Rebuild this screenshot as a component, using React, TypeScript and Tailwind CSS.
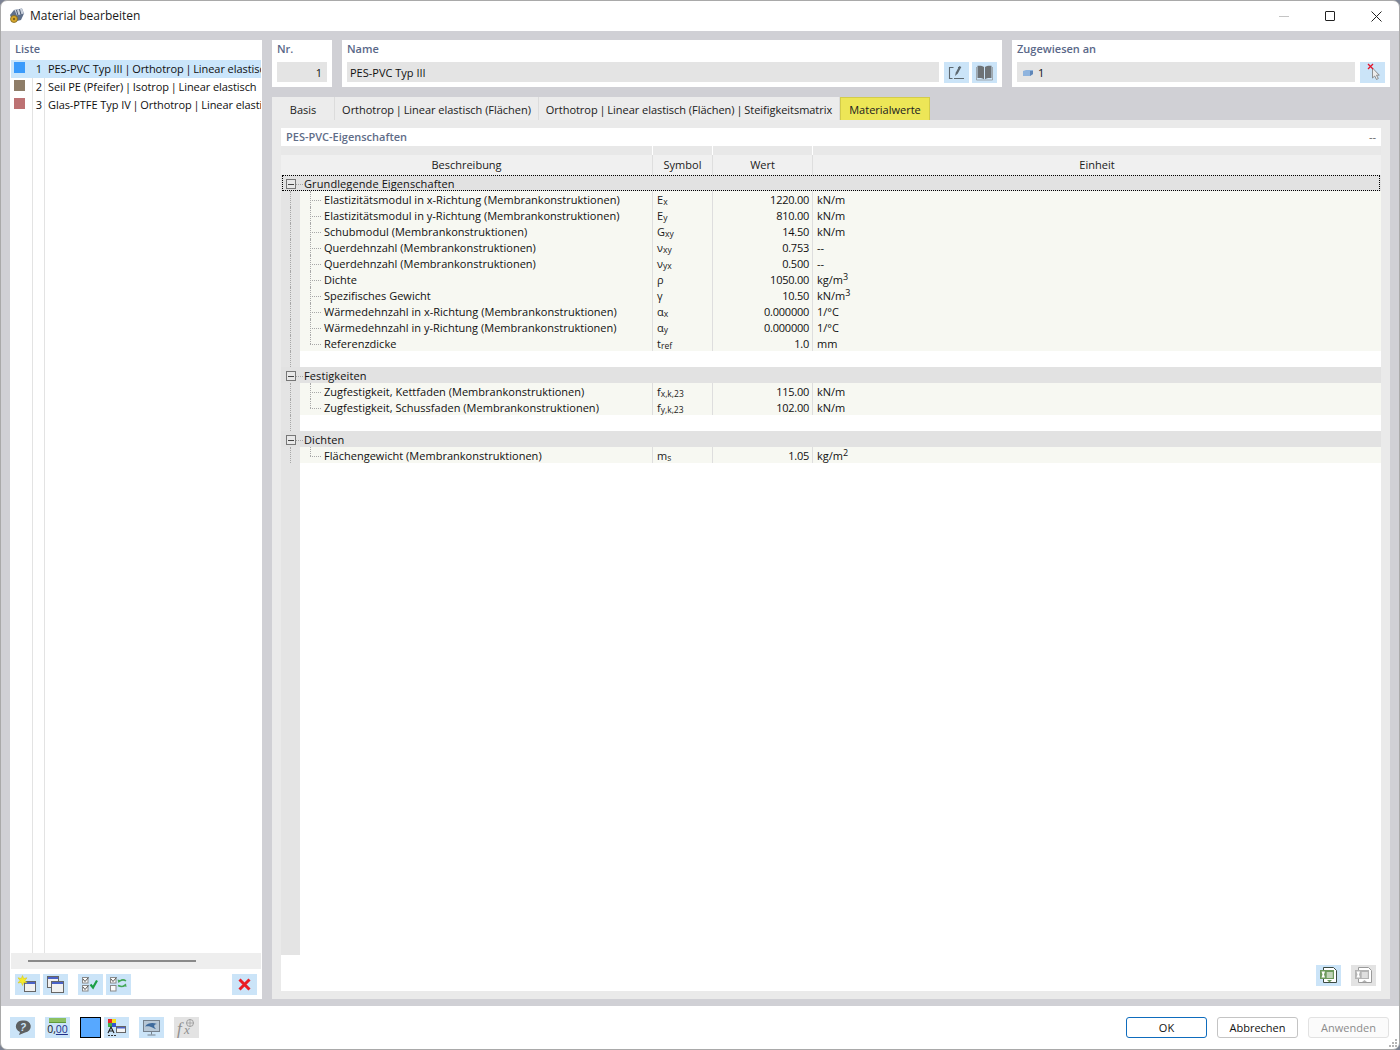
import React from "react";

const font = { fontFamily: '"Open Sans", "Liberation Sans", sans-serif' };

function Btn({ children, gray, className = "" }: { children?: React.ReactNode; gray?: boolean; className?: string }) {
  return (
    <div className={`w-[25px] h-[21px] flex items-center justify-center shrink-0 ${gray ? "bg-[#e3e3e3]" : "bg-[#cbe4f8]"} ${className}`}>
      {children}
    </div>
  );
}

function Piped({ text }: { text: string }) {
  const parts = text.split(" | ");
  return (
    <>
      {parts.map((p, i) => (
        <React.Fragment key={p}>
          {i > 0 && <span className="mx-[-1px]"> | </span>}
          {p}
        </React.Fragment>
      ))}
    </>
  );
}

function Win({ x, y, w, h }: { x: number; y: number; w: number; h: number }) {
  return (
    <g>
      <rect x={x + 0.5} y={y + 0.5} width={w} height={h} fill="#f1f1f1" stroke="#666" />
      <rect x={x + 1} y={y + 1} width={w - 1} height={2} fill="#4a62c8" />
    </g>
  );
}

function NewIcon() {
  return (
    <svg width="25" height="21" viewBox="0 0 25 21">
      <Win x={9} y={7} w={11} h={10} />
      <path d="M7.500 1.500l1.200 3 3.300-.7-2 2.600 2 2.600-3.300-.6L7.500 11.500 6.300 8.400 3 9l2-2.600-2-2.600 3.300.7z" fill="#f6ea2a" stroke="#d4c40c" strokeWidth="0.5" />
    </svg>
  );
}
function CopyIcon() {
  return (
    <svg width="25" height="21" viewBox="0 0 25 21">
      <Win x={4} y={2} w={11} h={11} />
      <Win x={8} y={7} w={12} h={11} />
    </svg>
  );
}
function CheckBox({ x, y, checked }: { x: number; y: number; checked: boolean }) {
  return (
    <g>
      <rect x={x + 0.5} y={y + 0.5} width="5.500" height="5.500" fill="#fafafa" stroke="#8a8a8a" />
      {checked && <path d={`M${x + 1} ${y + 2}l2 2.500 3.500-4`} fill="none" stroke="#444" strokeWidth="0.9" />}
    </g>
  );
}
function CheckAllIcon() {
  return (
    <svg width="25" height="21" viewBox="0 0 25 21">
      <CheckBox x={4} y={3} checked />
      <CheckBox x={4} y={11} checked />
      <path d="M12.500 10.500l2.500 3 4-7" fill="none" stroke="#1b9f45" strokeWidth="2.200" />
    </svg>
  );
}
function SwapIcon() {
  return (
    <svg width="25" height="21" viewBox="0 0 25 21">
      <CheckBox x={4} y={3} checked />
      <CheckBox x={4} y={11} checked={false} />
      <path d="M20 7c-2-1.500-4-1.500-6 0M12 11.500c2.500 1.200 5 1.200 7-.2" fill="none" stroke="#43a857" strokeWidth="1.500" />
      <path d="M11.500 5.500l1 3.500 3-2.500zM20.500 13l-.5-3.500-3 2z" fill="#43a857" />
    </svg>
  );
}
function EditIcon() {
  return (
    <svg width="25" height="21" viewBox="0 0 25 21">
      <path d="M9.500 5.500H5.500v11h3M10 16.500h10M14 5.500h3" fill="none" stroke="#5d6870" strokeWidth="1.100" />
      <path d="M11 14l.8-3.500 3.500-6.500 2 1-3.500 6.500z" fill="#5d6870" />
    </svg>
  );
}
function BookIcon() {
  return (
    <svg width="25" height="21" viewBox="0 0 25 21">
      <path d="M12 5C10.500 3.800 8 3.500 5.500 3.800V16c2.500-.3 5 0 6.500 1.200z" fill="#6d7276" />
      <path d="M13 5c1.500-1.200 4-1.500 6.500-1.200V16c-2.500-.3-5 0-6.500 1.200z" fill="#6d7276" />
      <path d="M4.500 5v13h16V5" fill="none" stroke="#93989c" strokeWidth="0.800" />
    </svg>
  );
}
function CursorX() {
  return (
    <svg width="25" height="21" viewBox="0 0 25 21">
      <path d="M12.500 6v10l2.200-2 1.800 3.500 1.800-1-1.800-3.300h2.800z" fill="#ececec" stroke="#777" strokeWidth="0.800" />
      <path d="M8 2l5 5M13 2l-5 5" stroke="#e3162c" strokeWidth="1.300" />
    </svg>
  );
}
function RedX() {
  return (
    <svg width="13" height="13" viewBox="0 0 13 13">
      <path d="M1.500 1.500l10 10M11.500 1.500l-10 10" stroke="#ea1c24" strokeWidth="3" />
    </svg>
  );
}
function Excel({ gray, up }: { gray?: boolean; up?: boolean }) {
  const g = gray ? "#b4b4b4" : "#6d9a5d";
  const d = gray ? "#9a9a9a" : "#3c4a42";
  return (
    <svg width="25" height="21" viewBox="0 0 25 21">
      <path d="M7.500 2.500h10l3 3v12h-13z" fill="#fff" stroke={d} strokeWidth="1" />
      <rect x="4" y="5" width="14" height="9" fill={g} />
      <path d="M5.500 6.500h3.500l-1 3 1 3H5.500l1-3z" fill="#fff" />
      <path d="M10.500 8h6M10.500 10h6M10.500 12h6M12 7v6M14 7v6M16 7v6" stroke="#fff" strokeWidth="0.700" />
      {up ? <path d="M13.500 15l-2.500 2h5z" fill={g} /> : <path d="M11 15h5l-2.500 2.500z" fill={g} />}
    </svg>
  );
}

type Row = { d: string; s: [string, string]; v: string; u: string; sup?: string };

const g1: Row[] = [
  { d: "Elastizitätsmodul in x-Richtung (Membrankonstruktionen)", s: ["E", "x"], v: "1220.00", u: "kN/m" },
  { d: "Elastizitätsmodul in y-Richtung (Membrankonstruktionen)", s: ["E", "y"], v: "810.00", u: "kN/m" },
  { d: "Schubmodul (Membrankonstruktionen)", s: ["G", "xy"], v: "14.50", u: "kN/m" },
  { d: "Querdehnzahl (Membrankonstruktionen)", s: ["ν", "xy"], v: "0.753", u: "--" },
  { d: "Querdehnzahl (Membrankonstruktionen)", s: ["ν", "yx"], v: "0.500", u: "--" },
  { d: "Dichte", s: ["ρ", ""], v: "1050.00", u: "kg/m", sup: "3" },
  { d: "Spezifisches Gewicht", s: ["γ", ""], v: "10.50", u: "kN/m", sup: "3" },
  { d: "Wärmedehnzahl in x-Richtung (Membrankonstruktionen)", s: ["α", "x"], v: "0.000000", u: "1/°C" },
  { d: "Wärmedehnzahl in y-Richtung (Membrankonstruktionen)", s: ["α", "y"], v: "0.000000", u: "1/°C" },
  { d: "Referenzdicke", s: ["t", "ref"], v: "1.0", u: "mm" },
];
const g2: Row[] = [
  { d: "Zugfestigkeit, Kettfaden (Membrankonstruktionen)", s: ["f", "x,k,23"], v: "115.00", u: "kN/m" },
  { d: "Zugfestigkeit, Schussfaden (Membrankonstruktionen)", s: ["f", "y,k,23"], v: "102.00", u: "kN/m" },
];
const g3: Row[] = [{ d: "Flächengewicht (Membrankonstruktionen)", s: ["m", "s"], v: "1.05", u: "kg/m", sup: "2" }];

function DataRow({ r, last }: { r: Row; last: boolean }) {
  return (
    <div className="flex h-4 leading-[18px]">
      <div className="w-[19px] shrink-0 relative bg-[#e4e4e4]">
        <span className="absolute left-[9px] top-0 bottom-0 border-l border-dotted border-[#a8a8a8]" />
      </div>
      <div className="w-[353px] shrink-0 bg-[#f7f8f2] border-r border-[#dedede] relative pl-[24px] whitespace-nowrap text-[#101010] tracking-[0.02px]">
        <span className={`absolute left-[10px] top-0 border-l border-dotted border-[#a8a8a8] ${last ? "h-[9px]" : "h-4"}`} />
        <span className="absolute left-[10px] top-[9px] w-[11px] border-t border-dotted border-[#a8a8a8]" />
        {r.d}
      </div>
      <div className="w-[60px] shrink-0 bg-[#f7f8f2] border-r border-[#dedede] pl-[4px] text-[#1a1a1a] whitespace-nowrap">
        {r.s[0]}
        <span className="text-[8.5px] relative top-[1px]">{r.s[1]}</span>
      </div>
      <div className="w-[100px] shrink-0 bg-[#f7f8f2] border-r border-[#dedede] pr-[3px] text-right tracking-[-0.25px]">{r.v}</div>
      <div className="flex-1 bg-[#f7f8f2] pl-[4px]">
        {r.u}
        {r.sup && <span className="text-[9px] relative top-[-4px]">{r.sup}</span>}
      </div>
    </div>
  );
}

function GroupRow({ label, focus }: { label: string; focus?: boolean }) {
  return (
    <div className="flex h-4 leading-[18px] relative bg-[#e2e2e2]">
      {focus && <span className="absolute left-[1px] right-[1px] top-0 bottom-0 border border-dotted border-black" />}
      <div className="w-[19px] shrink-0 relative">
        <span className="absolute left-[5px] top-[4px] w-[10px] h-[10px] border border-[#777] bg-[#e8e8e8] flex items-center justify-center">
          <span className="w-[6px] h-px bg-[#444]" />
        </span>
        <span className="absolute left-[15px] top-[9px] w-[7px] border-t border-dotted border-[#a8a8a8]" />
      </div>
      <div className="pl-[4px] text-[#101010] tracking-[0.1px]">{label}</div>
    </div>
  );
}

function Blank() {
  return (
    <div className="flex h-4">
      <div className="w-[19px] bg-[#e4e4e4] relative">
        <span className="absolute left-[9px] top-0 bottom-0 border-l border-dotted border-[#a8a8a8]" />
      </div>
      <div className="flex-1 bg-white" />
    </div>
  );
}

function ListRow({ color, n, text, sel }: { color: string; n: number; text: string; sel?: boolean }) {
  return (
    <div className={`flex h-[18px] leading-[18px] ${sel ? "bg-[#cbe6fb]" : ""}`}>
      <div className="w-[22px] shrink-0 pl-[3px] pt-[2px]">
        <div className="w-[11px] h-[11px]" style={{ backgroundColor: color }} />
      </div>
      <div className="w-[9px] shrink-0 text-right text-[#101010]">{n}</div>
      <div className="pl-[6px] whitespace-nowrap overflow-hidden text-[#101010] tracking-[-0.07px]">
        <Piped text={text} />
      </div>
    </div>
  );
}

const tabs = [
  { t: "Basis", w: "w-[63px]" },
  { t: "Orthotrop | Linear elastisch (Flächen)", w: "w-[204px]" },
  { t: "Orthotrop | Linear elastisch (Flächen) | Steifigkeitsmatrix", w: "w-[301px]" },
];

export default function App() {
  return (
    <div className="w-[1400px] h-[1050px] bg-[#7c8394] overflow-hidden" style={font}>
      <div className="w-[1400px] h-[1050px] bg-white border border-[#a9a9a9] rounded-[7px] overflow-hidden flex flex-col text-[11px] text-[#101010]">
        {/* title bar */}
        <div className="h-[30px] flex items-center shrink-0 relative">
          <svg className="ml-[8px]" width="16" height="16" viewBox="0 0 16 16">
            <path d="M1 7l4-5 8-1.500 2 5-3 6.500-8 2z" fill="#5f6f8a" />
            <path d="M5.500 2l7.500-1.500 2 5-7 2z" fill="#c9d0dc" />
            <path d="M7.500 2l1.500 5.500M10.500 1.200l1.500 5.500" stroke="#4a5870" strokeWidth="1" />
            <circle cx="5" cy="11" r="3.500" fill="#d9a82b" stroke="#7c6420" strokeWidth="0.800" />
            <circle cx="5" cy="11" r="1.200" fill="#7c6420" />
          </svg>
          <span className="ml-[5px] text-[12px] text-[#1a1a1a]">Material bearbeiten</span>
          <div className="ml-auto flex items-center">
            <div className="w-[46px] flex justify-center"><span className="w-[10px] h-px bg-[#c4c4c4]" /></div>
            <div className="w-[46px] flex justify-center"><span className="w-[10px] h-[10px] border border-[#222] rounded-[1px]" /></div>
            <div className="w-[46px] flex justify-center">
              <svg width="11" height="11" viewBox="0 0 11 11"><path d="M.5.500l10 10M10.500.500l-10 10" stroke="#222" /></svg>
            </div>
          </div>
        </div>
        {/* main */}
        <div className="flex-1 min-h-0 bg-[#d0d0d5] flex pt-[9px] pb-[7px] pl-[9px] pr-[9px] gap-[10px]">
          {/* left list */}
          <div className="w-[252px] shrink-0 bg-white flex flex-col">
            <div className="h-[20px] leading-[18px] pl-[5px] font-semibold text-[#5a6888]">Liste</div>
            <div className="flex-1 relative px-px">
              <span className="absolute left-[22px] top-0 bottom-0 border-l border-[#e3e3e3]" />
              <span className="absolute left-[34px] top-0 bottom-0 border-l border-[#e3e3e3]" />
              <div className="relative">
                <ListRow color="#3b9bfb" n={1} text="PES-PVC Typ III | Orthotrop | Linear elastisch" sel />
                <ListRow color="#8e7d68" n={2} text="Seil PE (Pfeifer) | Isotrop | Linear elastisch" />
                <ListRow color="#bd7273" n={3} text="Glas-PTFE Typ IV | Orthotrop | Linear elastisch" />
              </div>
            </div>
            <div className="h-[16px] mx-px bg-[#eeeeee] flex items-center pl-[17px]">
              <span className="w-[168px] h-[2px] bg-[#8a8a8a]" />
            </div>
            <div className="h-[30px] flex items-center pl-[5px] pr-[5px]">
              <Btn><NewIcon /></Btn>
              <Btn className="ml-[3px]"><CopyIcon /></Btn>
              <Btn className="ml-[10px]"><CheckAllIcon /></Btn>
              <Btn className="ml-[3px]"><SwapIcon /></Btn>
              <Btn className="ml-auto"><RedX /></Btn>
            </div>
          </div>
          {/* right */}
          <div className="flex-1 flex flex-col min-w-0">
            <div className="flex gap-[10px] h-[47px] shrink-0">
              <div className="w-[60px] bg-white px-[5px] flex flex-col">
                <div className="h-[20px] leading-[18px] font-semibold text-[#5a6888]">Nr.</div>
                <div className="h-[20px] mt-[2px] bg-[#e4e4e4] text-right pr-[5px] leading-[22px]">1</div>
              </div>
              <div className="w-[660px] bg-white px-[5px] flex flex-col">
                <div className="h-[20px] leading-[18px] font-semibold text-[#5a6888]">Name</div>
                <div className="flex gap-[3px] mt-[2px]">
                  <div className="flex-1 h-[20px] bg-[#e4e4e4] pl-[3px] leading-[22px] mr-[2px]">PES-PVC Typ III</div>
                  <Btn><EditIcon /></Btn>
                  <Btn><BookIcon /></Btn>
                </div>
              </div>
              <div className="flex-1 bg-white px-[5px] flex flex-col">
                <div className="h-[20px] leading-[18px] font-semibold text-[#5a6888]">Zugewiesen an</div>
                <div className="flex gap-[5px] mt-[2px]">
                  <div className="flex-1 h-[20px] bg-[#e4e4e4] pl-[6px] flex items-center gap-[5px] pt-[2px]">
                    <svg width="10" height="8" viewBox="0 0 10 8"><path d="M0 2l3-1h7v4L7 7H0z" fill="#8fb4de" /><path d="M7 2h3v3L7 7z" fill="#5f86b8" /></svg>
                    <span>1</span>
                  </div>
                  <Btn><CursorX /></Btn>
                </div>
              </div>
            </div>
            {/* tabs */}
            <div className="flex h-[23px] mt-[10px] shrink-0">
              {tabs.map((t) => (
                <div key={t.t} className={`${t.w} bg-[#ececec] border-r border-[#dcdcdc] flex items-center justify-center whitespace-nowrap text-[#202020] pt-[3px] tracking-[-0.03px]`}>
                  <span><Piped text={t.t} /></span>
                </div>
              ))}
              <div className="w-[90px] bg-[#ede657] border border-b-0 border-[#d3cc4a] flex items-center justify-center text-[#202020] pt-[3px]">Materialwerte</div>
            </div>
            {/* content */}
            <div className="flex-1 min-h-0 bg-[#eaeaea] px-[9px] py-[8px] flex flex-col">
              <div className="flex-1 min-h-0 bg-white flex flex-col">
                <div className="h-[18px] leading-[18px] flex justify-between pl-[5px] pr-[5px] shrink-0">
                  <span className="font-semibold text-[#5f6d88]">PES-PVC-Eigenschaften</span>
                  <span className="text-[#666]">--</span>
                </div>
                <div className="h-[9px] bg-[#e8e8e8] shrink-0 flex">
                  <div className="w-[372px] border-r border-white" />
                  <div className="w-[60px] border-r border-white" />
                  <div className="w-[100px] border-r border-white" />
                </div>
                <div className="h-[20px] bg-[#f0f0f0] shrink-0 flex items-center text-center text-[#202020] leading-[20px]">
                  <div className="w-[372px] border-r border-[#dedede] h-full">Beschreibung</div>
                  <div className="w-[60px] border-r border-[#dedede] h-full">Symbol</div>
                  <div className="w-[100px] border-r border-[#dedede] h-full">Wert</div>
                  <div className="flex-1">Einheit</div>
                </div>
                <div className="flex-1 min-h-0 flex flex-col">
                  <GroupRow label="Grundlegende Eigenschaften" focus />
                  {g1.map((r, i) => <DataRow key={r.d + i} r={r} last={i === g1.length - 1} />)}
                  <Blank />
                  <GroupRow label="Festigkeiten" />
                  {g2.map((r, i) => <DataRow key={r.d} r={r} last={i === g2.length - 1} />)}
                  <Blank />
                  <GroupRow label="Dichten" />
                  {g3.map((r) => <DataRow key={r.d} r={r} last />)}
                  <div className="flex-1 w-[19px] bg-[#e4e4e4]" />
                </div>
                <div className="h-[36px] shrink-0 flex items-start justify-end gap-[10px] pr-[5px] pt-[10px]">
                  <Btn><Excel /></Btn>
                  <Btn gray><Excel gray up /></Btn>
                </div>
              </div>
            </div>
          </div>
        </div>
        {/* footer */}
        <div className="h-[43px] shrink-0 flex items-center pl-[9px] pr-[10px] pb-[1px] relative">
          <Btn>
            <svg width="25" height="21" viewBox="0 0 25 21">
              <path d="M13.500 3.500a6.500 6 0 0 1 1.500 12L9 18l1-3a6.500 6 0 0 1 3.500-11.500z" fill="#5d6062" />
              <text x="13" y="13.500" fontSize="10" fontWeight="700" fontStyle="italic" fill="#cbe4f8" textAnchor="middle" fontFamily="Liberation Sans">?</text>
            </svg>
          </Btn>
          <Btn className="ml-[10px]">
            <div className="flex flex-col items-center leading-none">
              <span className="w-[17px] h-[5px] bg-[#8cc063] border-b border-[#5f9a3a]" />
              <span className="text-[10.5px] font-medium text-[#222] leading-[13px]">0,<span className="underline text-[#20308a]">00</span></span>
            </div>
          </Btn>
          <div className="ml-[10px] w-[21px] h-[21px] bg-[#57a8ff] border-[1.5px] border-black" />
          <Btn className="ml-[3px]">
            <svg width="25" height="21" viewBox="0 0 25 21">
              <rect x="4" y="2" width="4" height="4" fill="#e8242b" />
              <rect x="8" y="2" width="4" height="4" fill="#f0e020" />
              <rect x="4" y="6" width="4" height="4" fill="#3fae49" />
              <rect x="8" y="6" width="4" height="4" fill="#3552d0" />
              <rect x="12.500" y="9.500" width="9" height="6" fill="#f4f4f4" stroke="#666" />
              <rect x="13" y="10" width="8" height="1.500" fill="#4a62c8" />
              <path d="M4 16l3-6 3 6M5 14h4" stroke="#222" strokeWidth="1.200" fill="none" />
              <path d="M4 18.500h2M7 18.500h2M10 18.500h2" stroke="#333" strokeWidth="1.200" />
            </svg>
          </Btn>
          <Btn className="ml-[10px]">
            <svg width="25" height="21" viewBox="0 0 25 21">
              <rect x="4.500" y="3.500" width="16" height="11" fill="#b7c7d6" stroke="#74808c" />
              <path d="M6 9.500c3-4 8-4 12-2.500-2 .3-3 1.200-2.800 2.500.2 1 .8 1.800 1.800 2.500-4-.8-5-3.500-11-2.500z" fill="#3e6a9c" />
              <path d="M12.500 15v2.500M8.500 18h8" stroke="#74808c" />
            </svg>
          </Btn>
          <Btn gray className="ml-[10px]">
            <svg width="25" height="21" viewBox="0 0 25 21">
              <text x="3" y="17" fontSize="17" fontStyle="italic" fontFamily="Liberation Serif" fill="#8f8f8f">f</text>
              <text x="10" y="17" fontSize="13" fontStyle="italic" fontFamily="Liberation Serif" fill="#8f8f8f">x</text>
              <circle cx="16" cy="6" r="3.500" fill="#e3e3e3" stroke="#8f8f8f" strokeWidth="0.800" />
              <path d="M12.500 6h7M16 2.500v7" stroke="#8f8f8f" strokeWidth="0.600" />
            </svg>
          </Btn>
          <div className="ml-auto flex gap-[10px] mt-[1px]">
            <div className="w-[81px] h-[21px] border border-[#0f6cbd] rounded-[3px] flex items-center justify-center text-[#111] pt-[2px]">OK</div>
            <div className="w-[81px] h-[21px] border border-[#c4c4c4] rounded-[3px] flex items-center justify-center text-[#111] pt-[2px]">Abbrechen</div>
            <div className="w-[81px] h-[21px] border border-[#e2e2e2] bg-[#fbfbfb] rounded-[3px] flex items-center justify-center text-[#8c8c8c] pt-[2px]">Anwenden</div>
          </div>
          <svg className="absolute right-[1px] bottom-[1px]" width="10" height="10" viewBox="0 0 10 10">
            <path d="M7 1h2v2H7zM4 4h2v2H4zM7 4h2v2H7zM1 7h2v2H1zM4 7h2v2H4zM7 7h2v2H7z" fill="#b5b5b5" />
          </svg>
        </div>
      </div>
    </div>
  );
}
